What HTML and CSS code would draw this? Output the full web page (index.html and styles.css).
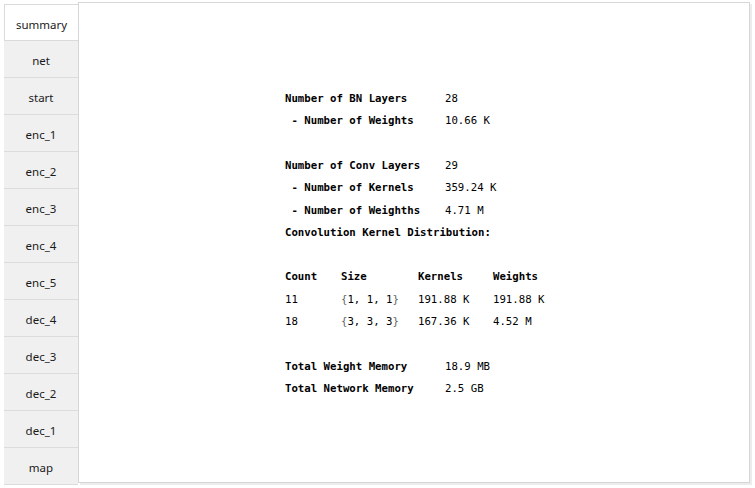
FILE: index.html
```html
<!DOCTYPE html>
<html>
<head>
<meta charset="utf-8">
<link rel="stylesheet" href="styles.css">
</head>
<body>
<div class="app">
  <nav class="tabs">
    <div class="tab active">summary</div>
    <div class="tab">net</div>
    <div class="tab">start</div>
    <div class="tab">enc_1</div>
    <div class="tab">enc_2</div>
    <div class="tab">enc_3</div>
    <div class="tab">enc_4</div>
    <div class="tab">enc_5</div>
    <div class="tab">dec_4</div>
    <div class="tab">dec_3</div>
    <div class="tab">dec_2</div>
    <div class="tab">dec_1</div>
    <div class="tab">map</div>
  </nav>
  <main class="panel">
    <div class="report">
      <div class="pairs">
        <div class="lbl">Number of BN Layers</div><div class="val">28</div>
        <div class="lbl"> - Number of Weights</div><div class="val">10.66 K</div>
        <div class="blank"></div>
        <div class="lbl">Number of Conv Layers</div><div class="val">29</div>
        <div class="lbl"> - Number of Kernels</div><div class="val">359.24 K</div>
        <div class="lbl"> - Number of Weighths</div><div class="val">4.71 M</div>
        <div class="lbl wide">Convolution Kernel Distribution:</div>
        <div class="blank"></div>
      </div>
      <div class="dist">
        <div class="lbl">Count</div><div class="lbl">Size</div><div class="lbl">Kernels</div><div class="lbl">Weights</div>
        <div class="val">11</div><div class="val"><span class="br">{</span>1, 1, 1<span class="br">}</span></div><div class="val">191.88 K</div><div class="val">191.88 K</div>
        <div class="val">18</div><div class="val"><span class="br">{</span>3, 3, 3<span class="br">}</span></div><div class="val">167.36 K</div><div class="val">4.52 M</div>
      </div>
      <div class="pairs">
        <div class="blank"></div>
        <div class="lbl">Total Weight Memory</div><div class="val">18.9 MB</div>
        <div class="lbl">Total Network Memory</div><div class="val">2.5 GB</div>
      </div>
    </div>
  </main>
</div>
</body>
</html>
```

FILE: styles.css
```css
html, body {
  margin: 0;
  padding: 0;
  background: #ffffff;
}

.app {
  display: flex;
  align-items: flex-start;
  padding: 4px 0 0 4px;
  height: 488px;
  box-sizing: border-box;
  overflow: hidden;
}

.tabs {
  display: flex;
  flex-direction: column;
  width: 74px;
  flex: none;
}

.tab {
  height: 37px;
  box-sizing: border-box;
  background: #f0f0f0;
  border-bottom: 1px solid #dcdcdc;
  font-family: "Noto Sans", "Open Sans", sans-serif;
  font-size: 11.5px;
  color: #1a1a1a;
  display: flex;
  align-items: center;
  justify-content: center;
  padding-top: 3px;
}

.tab.active {
  background: #ffffff;
  border: 1px solid #dadada;
  border-right: none;
}

.panel {
  margin-top: -2px;
  width: 672px;
  height: 481px;
  box-sizing: border-box;
  border: 1px solid #d6d6d6;
  box-shadow: 2px 2px 0 #ececec;
  background: #ffffff;
  display: flex;
  align-items: center;
  justify-content: center;
}

.report {
  width: 262px;
  font-family: "DejaVu Sans Mono", "Liberation Mono", monospace;
  font-size: 10.7px;
  color: #000;
  margin-top: 2px;
  margin-left: 4px;
}

.pairs {
  display: grid;
  grid-template-columns: 160px auto;
  grid-auto-rows: 22.3px;
  align-items: center;
}

.dist {
  display: grid;
  grid-template-columns: 56px 77px 75px auto;
  grid-auto-rows: 22.3px;
  align-items: center;
}

.lbl {
  font-weight: bold;
  white-space: pre;
}

.val {
  white-space: pre;
}

.wide, .blank {
  grid-column: 1 / -1;
}

.br {
  color: #666;
}
```
